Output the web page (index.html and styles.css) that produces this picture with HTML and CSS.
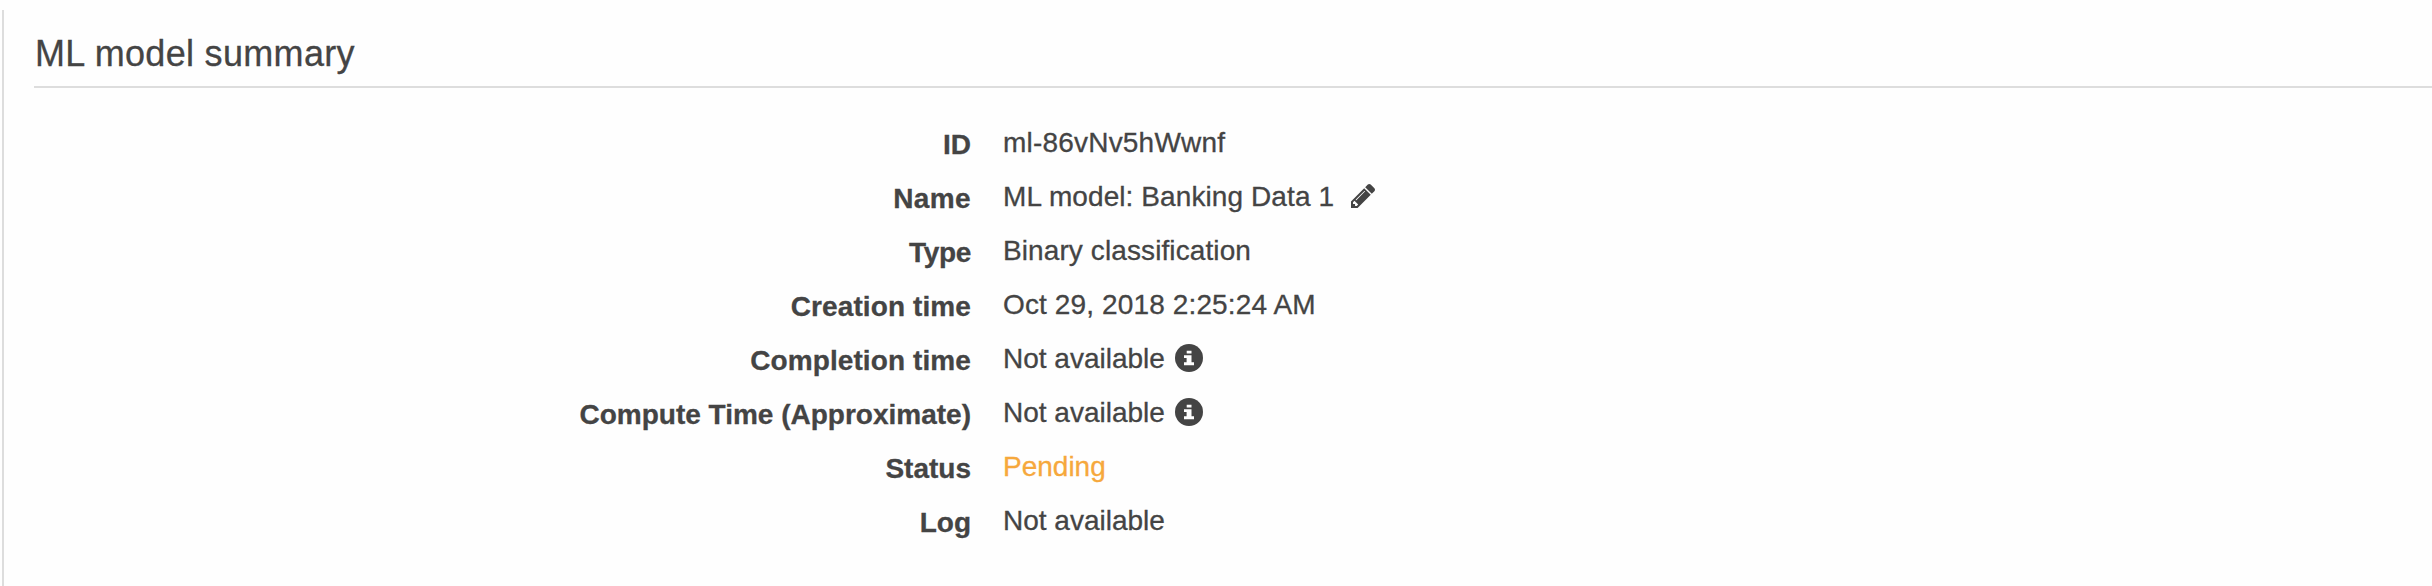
FILE: index.html
```html
<!DOCTYPE html>
<html lang="en">
<head>
<meta charset="utf-8">
<title>ML model summary</title>
<link rel="stylesheet" href="styles.css">
</head>
<body>
<svg class="defs" aria-hidden="true">
  <symbol id="info" viewBox="0 0 28 28">
    <circle cx="14" cy="14" r="14"/>
    <path class="info-mark" d="M11.7 6.8h4.8v2.7h-4.8zM9 11.2h7.5v7.1H19v2.9H9v-2.9h2.6V14H9z"/>
  </symbol>
</svg>
<main class="panel">
  <h1 class="title">ML model summary</h1>
  <dl class="details">
    <dt>ID</dt><dd><span class="v-id">ml-86vNv5hWwnf</span></dd>
    <dt class="l-name">Name</dt><dd><span class="v-name">ML model: Banking Data 1</span><svg class="pencil" viewBox="128 149 1515 1515"><path d="M491 1536l91-91-235-235-91 91v107h128v128h107zm523-928q0-22-22-22-10 0-17 7l-542 542q-7 7-7 17 0 22 22 22 10 0 17-7l542-542q7-7 7-17zm-54-192l416 416-832 832h-416v-416zm683 96q0 53-37 90l-166 166-416-416 166-165q36-38 90-38 53 0 91 38l235 234q37 39 37 91z"/></svg></dd>
    <dt class="l-type">Type</dt><dd><span class="v-type">Binary classification</span></dd>
    <dt class="l-time">Creation time</dt><dd><span class="v-date">Oct 29, 2018 2:25:24 AM</span></dd>
    <dt class="l-time">Completion time</dt><dd><span>Not available</span><svg class="info"><use href="#info"/></svg></dd>
    <dt>Compute Time (Approximate)</dt><dd><span>Not available</span><svg class="info"><use href="#info"/></svg></dd>
    <dt>Status</dt><dd class="pending"><span>Pending</span></dd>
    <dt>Log</dt><dd><span>Not available</span></dd>
  </dl>
</main>
</body>
</html>
```
FILE: styles.css
```css
* { box-sizing: border-box; }
body {
  margin: 0;
  height: 586px;
  padding: 10px 0 0 2px;
  overflow: hidden;
  background: #fefefe;
  color: #444;
  font: 28px/40px "Helvetica Neue", "Liberation Sans", Arial, sans-serif;
  -webkit-text-stroke: 0.3px currentColor;
}
.defs { display: none; }
.panel {
  height: 576px;
  padding: 23px 0 0 30px;
  border-left: 2px solid #ddd;
}
.title {
  margin: 0;
  height: 55px;
  padding-left: 1px;
  border-bottom: 2px solid #ddd;
  font-size: 36px;
  font-weight: 400;
  line-height: 41px;
  letter-spacing: 0.32px;
}
.details {
  display: grid;
  grid-template-columns: 937px 1fr;
  column-gap: 32px;
  grid-auto-rows: 54px;
  margin: 34px 0 0;
}
dt {
  padding-top: 3px;
  text-align: right;
  font-weight: 700;
}
dd {
  display: flex;
  align-items: flex-start;
  margin: 0;
}
dd span { padding-top: 1px; }
.l-name { letter-spacing: 0.4px; }
.l-type { letter-spacing: -0.3px; }
.l-time { letter-spacing: 0.1px; }
.v-id { letter-spacing: 0.2px; }
.v-name { letter-spacing: 0.09px; }
.v-type { letter-spacing: 0.1px; }
.v-date { letter-spacing: 0.13px; }
.pending { color: #f6a83c; }
svg { fill: #444; }
.info-mark { fill: #fff; }
.info { width: 28px; height: 28px; margin: 6px 0 0 10px; }
.pencil { width: 24px; height: 24px; margin: 8px 0 0 17px; }
```
